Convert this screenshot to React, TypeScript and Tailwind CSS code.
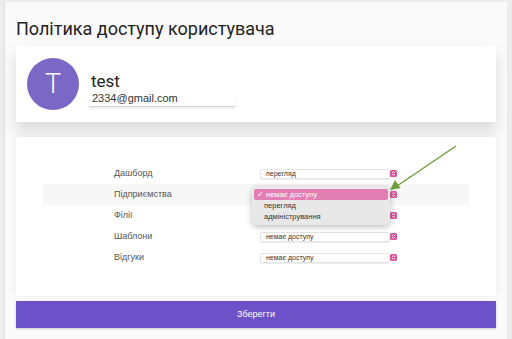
import React from 'react'

const rows = [
  { label: 'Дашборд', value: 'перегляд' },
  { label: 'Підприємства', value: 'немає доступу', active: true, covered: true },
  { label: 'Філії', value: 'немає доступу', covered: true },
  { label: 'Шаблони', value: 'немає доступу' },
  { label: 'Відгуки', value: 'немає доступу' },
]

function SelectIcon() {
  return (
    <span className="flex h-[7px] w-[7px] items-center justify-center rounded-[1.5px] bg-[#d9589b]">
      <svg viewBox="0 0 8 8" className="h-[7px] w-[7px]" fill="none" stroke="white" strokeWidth="1">
        <path d="M2.5 3.2 4 1.8 5.5 3.2" />
        <path d="M2.5 4.8 4 6.2 5.5 4.8" />
      </svg>
    </span>
  )
}

function FakeSelect({ value, covered }: { value: string; covered?: boolean }) {
  return (
    <div className="flex items-center">
      <div className="flex h-[10px] w-[130px] items-center rounded-[2px] border border-[#e4e4e4] bg-white pl-[5px] shadow-[0_1px_1px_rgba(0,0,0,0.08)]">
        {!covered && <span className="text-[7px] leading-none text-[#333]">{value}</span>}
      </div>
      <span className="ml-auto">
        <SelectIcon />
      </span>
    </div>
  )
}

export default function App() {
  return (
    <div className="relative h-[339px] w-[512px] overflow-hidden bg-[#ececec] font-['Liberation_Sans',sans-serif]">
      <div className="ml-[4px] mt-[2px] h-[337px] w-[503px] border-l border-[#dedede] bg-[#fafafa] px-[11px] pt-[14px]">
        <h1 className="mb-[4px] font-['Roboto',sans-serif] text-[18px] leading-[26px] text-[#222]">
          Політика доступу користувача
        </h1>

        {/* user card */}
        <div className="flex h-[76px] items-center bg-white pl-[11px] shadow-[0_9px_14px_rgba(0,0,0,0.13)]">
          <div className="flex h-[52px] w-[52px] items-center justify-center rounded-full bg-[#7b67c6] font-['Roboto',sans-serif] text-[27px] font-light text-white">
            T
          </div>
          <div className="ml-[10px] flex flex-col pt-[10px]">
            <div className="pl-[2px] font-['Roboto',sans-serif] text-[17px] leading-[20px] text-[#222]">test</div>
            <div className="mt-[1px] w-[146px] border-b border-[#d4d4d4] pb-[1px] pl-[3px] text-[11px] leading-[13px] text-[#333] shadow-[0_2px_2px_rgba(0,0,0,0.06)]">
              2334@gmail.com
            </div>
          </div>
        </div>

        {/* permissions card */}
        <div className="relative mt-[15px] h-[159px] bg-white px-[27px] pt-[26px] shadow-[0_0_6px_rgba(0,0,0,0.06)]">
          {rows.map((r) => (
            <div
              key={r.label}
              className={`flex h-[21px] items-center pl-[71px] ${r.active ? 'bg-[#f7f7f7]' : ''}`}
            >
              <span className="w-[146px] text-[9px] text-[#555]">{r.label}</span>
              <div className="w-[137px]">
                <FakeSelect value={r.value} covered={r.covered} />
              </div>
            </div>
          ))}

          {/* open dropdown */}
          <div className="absolute left-[236px] top-[49px] w-[138px] rounded-[5px] bg-[#e8e8e8] px-[2px] py-[3px] shadow-[0_2px_6px_rgba(0,0,0,0.25)]">
            <div className="flex h-[11px] items-center rounded-[2px] bg-[#e27fb2] pl-[3px] text-[7.5px] text-white">
              <span className="mr-[2px]">✓</span>немає доступу
            </div>
            <div className="flex h-[11px] items-center pl-[10px] text-[7.5px] text-[#333]">перегляд</div>
            <div className="flex h-[11px] items-center pl-[10px] text-[7.5px] text-[#333]">адміністрування</div>
          </div>
        </div>

        <button className="mt-[5px] flex h-[27px] w-full items-center justify-center bg-[#6b52c8] text-[9px] text-white shadow-[0_1px_2px_rgba(0,0,0,0.2)]">
          Зберегти
        </button>
      </div>

      {/* annotation arrow */}
      <svg className="absolute left-[385px] top-[140px]" width="80" height="56" viewBox="0 0 80 56">
        <line x1="71" y1="6" x2="12" y2="46" stroke="#6f9c3a" strokeWidth="1.4" />
        <path d="M5 50 L10 40 L15.5 48 Z" fill="#6f9c3a" />
      </svg>
    </div>
  )
}
